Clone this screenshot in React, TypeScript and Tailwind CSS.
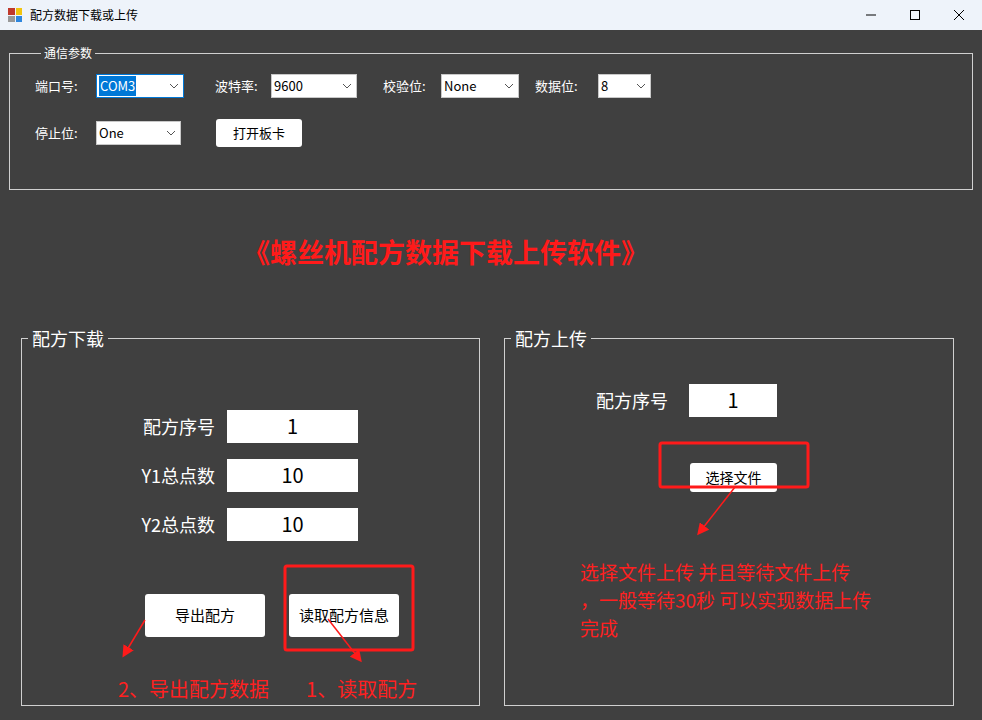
const F = { fontFamily: '"Microsoft YaHei","Noto Sans CJK SC","Liberation Sans",sans-serif' }

function Combo({ value, w, selected }: { value: string; w: number; selected?: boolean }) {
  return (
    <div
      className={`flex h-6 items-center justify-between bg-white pl-[2px] pr-1 text-[13px] text-black border ${selected ? 'border-[#0078d7]' : 'border-[#c8c8c8]'}`}
      style={{ width: w }}
    >
      <span className={selected ? 'bg-[#0078d7] text-white px-[1px]' : ''}>{value}</span>
      <svg width="10" height="6" viewBox="0 0 10 6"><path d="M1 1l4 4 4-4" stroke="#555" fill="none" /></svg>
    </div>
  )
}

function Field({ label, value }: { label: string; value: string }) {
  return (
    <div className="flex items-center">
      <span className="w-[205px] pr-3 text-right text-[18px] text-white">{label}</span>
      <div className="flex h-[33px] w-[131px] items-center justify-center bg-white text-[20px] text-black">{value}</div>
    </div>
  )
}

export default function App() {
  return (
    <div className="relative h-[720px] w-[982px] overflow-hidden bg-[#404040]" style={F}>
      <div className="flex h-[30px] items-center bg-[#eef3fa] text-[12px] text-black">
        <div className="ml-[8px] mr-[8px] grid h-[14px] w-[14px] grid-cols-2 gap-[1px]">
          <div className="bg-[#c0392b]" /><div className="bg-[#f1c40f]" /><div className="bg-[#999]" /><div className="bg-[#2e86de]" />
        </div>
        <span>配方数据下载或上传</span>
        <div className="ml-auto flex items-center gap-[34px] pr-[18px]">
          <svg width="10" height="10"><path d="M0 5h10" stroke="#000" /></svg>
          <svg width="10" height="10"><rect x="0.5" y="0.5" width="9" height="9" stroke="#000" fill="none" /></svg>
          <svg width="10" height="10"><path d="M0 0l10 10M10 0L0 10" stroke="#000" /></svg>
        </div>
      </div>

      <fieldset className="mx-[9px] mt-[14px] h-[146px] border border-[#d0d0d0] px-[25px] pt-[12px]">
        <legend className="ml-[6px] px-[3px] text-[12px] text-white">通信参数</legend>
        <div className="flex items-center text-[13px] text-white">
          <span className="w-[61px]">端口号:</span><Combo value="COM3" w={88} selected />
          <span className="ml-[31px] w-[56px]">波特率:</span><Combo value="9600" w={86} />
          <span className="ml-[26px] w-[58px]">校验位:</span><Combo value="None" w={78} />
          <span className="ml-[16px] w-[63px]">数据位:</span><Combo value="8" w={53} />
        </div>
        <div className="mt-[21px] flex items-center text-[13px] text-white">
          <span className="w-[61px]">停止位:</span><Combo value="One" w={85} />
          <button className="ml-[35px] h-[28px] w-[86px] rounded-[3px] bg-white text-[13px] text-black">打开板卡</button>
        </div>
      </fieldset>

      <div className="mt-[42px] pl-[243px] text-[27px] font-bold text-[#ff1a1a]">《螺丝机配方数据下载上传软件》</div>

      <div className="mt-[52px] flex gap-[24px] pl-[21px]">
        <fieldset className="h-[381px] w-[459px] border border-[#d0d0d0] pl-[0px]">
          <legend className="ml-[6px] px-[4px] text-[18px] text-white">配方下载</legend>
          <div className="mt-[58px] flex flex-col gap-[16px]">
            <Field label="配方序号" value="1" />
            <Field label="Y1总点数" value="10" />
            <Field label="Y2总点数" value="10" />
          </div>
          <div className="mt-[53px] flex gap-[24px] pl-[123px]">
            <button className="h-[43px] w-[120px] rounded-[3px] bg-white text-[15px] text-black">导出配方</button>
            <button className="h-[43px] w-[110px] rounded-[3px] bg-white text-[15px] text-black">读取配方信息</button>
          </div>
          <div className="mt-[37px] flex text-[20px] text-[#ff2020]">
            <span className="ml-[96px]">2、导出配方数据</span>
            <span className="ml-[37px]">1、读取配方</span>
          </div>
        </fieldset>
        <fieldset className="h-[381px] w-[450px] border border-[#d0d0d0]">
          <legend className="ml-[6px] px-[4px] text-[18px] text-white">配方上传</legend>
          <div className="mt-[32px] flex items-center pl-[91px]">
            <span className="w-[93px] text-[18px] text-white">配方序号</span>
            <div className="flex h-[33px] w-[88px] items-center justify-center bg-white text-[20px] text-black">1</div>
          </div>
          <button className="ml-[185px] mt-[46px] h-[29px] w-[87px] rounded-[3px] bg-white text-[14px] text-black">选择文件</button>
          <div className="ml-[75px] mt-[66px] text-[19px] leading-[28px] text-[#ff2020]">
            <div>选择文件上传 并且等待文件上传</div>
            <div>，一般等待30秒 可以实现数据上传</div>
            <div>完成</div>
          </div>
        </fieldset>
      </div>

      <svg className="pointer-events-none absolute left-0 top-0" width="982" height="720">
        <defs>
          <marker id="a" markerWidth="8" markerHeight="8" refX="6" refY="4" orient="auto">
            <path d="M0 0L8 4L0 8z" fill="#ff1a1a" />
          </marker>
        </defs>
        <rect x="285" y="566" width="128" height="84" rx="2" fill="none" stroke="#ff1a1a" strokeWidth="3" />
        <rect x="660" y="443" width="148" height="44" rx="2" fill="none" stroke="#ff1a1a" strokeWidth="3" />
        <line x1="145" y1="620" x2="124" y2="655" stroke="#ff1a1a" strokeWidth="1.5" markerEnd="url(#a)" />
        <line x1="328" y1="619" x2="360" y2="660" stroke="#ff1a1a" strokeWidth="1.5" markerEnd="url(#a)" />
        <line x1="735" y1="487" x2="699" y2="533" stroke="#ff1a1a" strokeWidth="1.5" markerEnd="url(#a)" />
      </svg>
    </div>
  )
}
